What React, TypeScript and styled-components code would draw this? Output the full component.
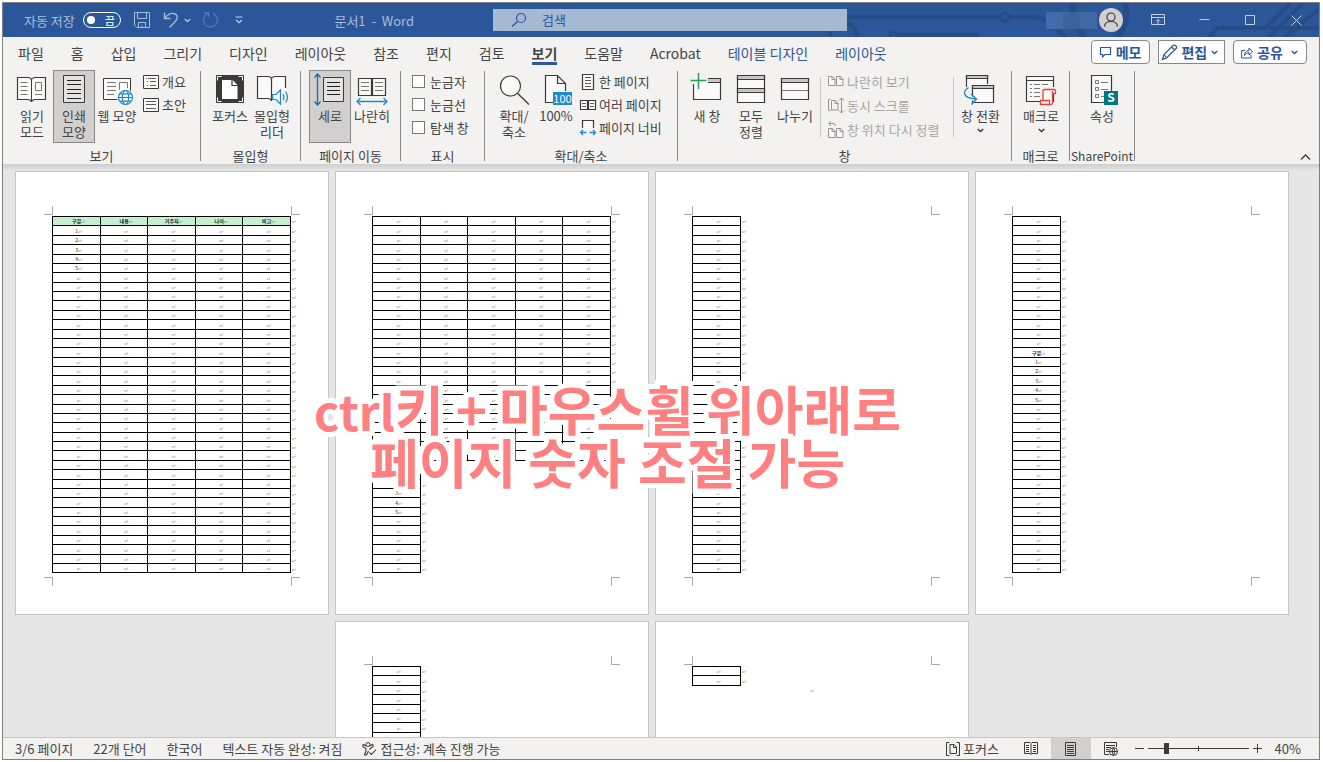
import React from "react";
import styled, { createGlobalStyle, css } from "styled-components";

const BLUE = "#2b579a";
const INK = "#3b3a39";

const GlobalStyle = createGlobalStyle`
  * { box-sizing: border-box; }
  html, body { margin: 0; padding: 0; background: #fff; }
  body {
    font-family: "Noto Sans CJK KR", "Noto Sans", sans-serif;
    font-size: 13px;
    color: #444;
  }
  button, input { font: inherit; color: inherit; }
  button { background: none; border: 0; padding: 0; margin: 0; }
`;

const Frame = styled.div`
  height: 100vh;
  padding: 2px 3px 2px 2px;
`;

const Window = styled.div`
  position: relative;
  height: 100%;
  display: flex;
  flex-direction: column;
  overflow: hidden;
  border: 1px solid #7f7f7f;
  background: #f3f2f1;
`;

/* ---------- title bar ---------- */

const TitleBar = styled.header`
  position: relative;
  flex: none;
  height: 34px;
  display: grid;
  grid-template-columns: 490fr 354fr 472fr;
  align-items: center;
  background: ${BLUE};
  color: #a9bddb;
`;

const Circuit = styled.svg`
  position: absolute;
  right: 0;
  top: 0;
`;

const TitleLeft = styled.div`
  display: flex;
  align-items: center;
  height: 34px;
  padding-left: 21px;
  white-space: nowrap;
`;

const AutoSave = styled.label`
  display: flex;
  align-items: center;
  gap: 8px;
`;

const Toggle = styled.button`
  width: 38px;
  height: 16px;
  display: flex;
  align-items: center;
  justify-content: space-between;
  padding: 0 5px 0 3px;
  border: 1px solid #fff;
  border-radius: 8px;
  color: #fff;
  font-size: 11px;
  line-height: 14px;
`;

const Knob = styled.span`
  width: 8px;
  height: 8px;
  border-radius: 50%;
  background: #fff;
`;

const QuickButton = styled.button<{ $space: number }>`
  display: flex;
  margin-left: ${(p) => p.$space}px;
`;

const DocTitle = styled.span`
  margin-left: auto;
  padding-right: 79px;
  white-space: pre;
`;

const SearchBox = styled.label`
  position: relative;
  display: flex;
  align-items: center;
  gap: 14px;
  height: 22px;
  padding-left: 18px;
  background: #a6b9d3;
  color: ${BLUE};
  input {
    flex: 1;
    min-width: 0;
    border: 0;
    padding: 0;
    background: none;
    outline: none;
    line-height: 20px;
  }
  input::placeholder { color: ${BLUE}; opacity: 1; }
`;

const TitleRight = styled.div`
  position: relative;
  display: flex;
  justify-content: flex-end;
  align-items: center;
`;

const UserName = styled.span`
  display: flex;
  width: 51px;
  height: 17px;
  margin-right: 2px;
  background: linear-gradient(90deg, #446ba9 0 17px, #3c639c 17px 34px, #4169a5 34px);
`;

const Avatar = styled.button`
  display: flex;
  width: 24px;
  height: 24px;
  margin-right: 12px;
  border-radius: 50%;
  background: #d2d0ce;
`;

const WindowButton = styled.button`
  width: 46px;
  height: 34px;
  display: flex;
  align-items: center;
  justify-content: center;
`;

/* ---------- tabs ---------- */

const TabBar = styled.nav`
  flex: none;
  display: flex;
  align-items: flex-start;
  height: 32px;
  padding: 3px 12px 0 15px;
`;

const Tab = styled.button<{ $active?: boolean; $context?: boolean }>`
  height: 25px;
  margin-right: 27px;
  font-size: 14px;
  line-height: 24px;
  white-space: nowrap;
  color: ${(p) => (p.$context ? BLUE : "#444")};
  ${(p) =>
    p.$active &&
    css`
      font-weight: 700;
      box-shadow: inset 0 -3px ${BLUE};
    `}
`;

const TabActions = styled.div`
  display: flex;
  gap: 8px;
  margin-left: auto;
`;

const ActionButton = styled.button<{ $square?: boolean }>`
  display: flex;
  align-items: center;
  gap: 4px;
  height: 24px;
  padding: 0 ${(p) => (p.$square ? 6 : 8)}px 0 ${(p) => (p.$square ? 2 : 7)}px;
  border: 1px solid #8a8886;
  border-radius: ${(p) => (p.$square ? 0 : 4)}px;
  background: #fff;
  color: ${BLUE};
  font-size: 14px;
  font-weight: 700;
  line-height: 20px;
  white-space: nowrap;
`;

/* ---------- ribbon ---------- */

const Ribbon = styled.div`
  position: relative;
  z-index: 1;
  flex: none;
  display: flex;
  height: 95px;
`;

const Group = styled.section<{ $width: number; $pad?: number }>`
  flex: none;
  display: flex;
  flex-direction: column;
  justify-content: space-between;
  width: ${(p) => p.$width}px;
  padding: 1px 0 0 ${(p) => p.$pad ?? 8}px;
  background: linear-gradient(#8a8886, #8a8886) right 2px / 1px 90px no-repeat;
`;

const GroupBody = styled.div<{ $gap?: number }>`
  display: flex;
  gap: ${(p) => p.$gap ?? 0}px;
`;

const GroupName = styled.h2<{ $pad?: number; $small?: boolean }>`
  margin: 0 1px 0 -${(p) => p.$pad ?? 8}px;
  font-size: ${(p) => (p.$small ? 12 : 13)}px;
  font-weight: 400;
  line-height: 16px;
  text-align: center;
  white-space: nowrap;
  color: #444;
`;

const LargeButton = styled.button<{ $active?: boolean; $wide?: boolean }>`
  flex: none;
  display: flex;
  flex-direction: column;
  align-items: center;
  gap: 2px;
  width: ${(p) => (p.$wide ? 44 : 42)}px;
  height: 73px;
  padding-top: 3px;
  border: 1px solid ${(p) => (p.$active ? "#8a8886" : "transparent")};
  background: ${(p) => (p.$active ? "#d2d0ce" : "transparent")};
  line-height: 16px;
  white-space: nowrap;
  color: #444;
  svg { flex: none; overflow: visible; }
  svg + svg { margin-top: 2px; }
`;

const SmallColumn = styled.div<{ $row: number; $space?: number }>`
  display: grid;
  grid-auto-rows: ${(p) => p.$row}px;
  align-content: start;
  margin-left: ${(p) => p.$space ?? 4}px;
`;

const SmallButton = styled.button`
  display: flex;
  align-items: center;
  gap: 3px;
  white-space: nowrap;
  line-height: 20px;
  &:disabled { color: #a8a6a4; }
  svg { flex: none; overflow: visible; }
`;

const CheckRow = styled.label`
  display: flex;
  align-items: center;
  gap: 5px;
  white-space: nowrap;
  line-height: 20px;
`;

const CheckBox = styled.input`
  appearance: none;
  width: 13px;
  height: 13px;
  margin: 0;
  border: 1px solid #7a7876;
  background: #fff;
`;

const InnerRule = styled.span<{ $before: number; $after: number }>`
  width: 1px;
  height: 60px;
  margin: 7px ${(p) => p.$after}px 0 ${(p) => p.$before}px;
  background: #c8c6c4;
`;

const Collapse = styled.button`
  display: flex;
  align-self: flex-end;
  margin: 0 8px 3px auto;
`;

/* ---------- document ---------- */

const Workspace = styled.main`
  flex: 1;
  min-height: 0;
  overflow: hidden;
  display: flex;
  flex-wrap: wrap;
  justify-content: center;
  align-content: flex-start;
  gap: 6px;
  padding: 7px 18px 0 0;
  background: linear-gradient(#cecece, #e6e6e6 7px);
`;

const Sheet = styled.article`
  position: relative;
  display: flex;
  flex-direction: column;
  width: 314px;
  height: 444px;
  padding: 34px 28px 28px;
  border: 1px solid #c6c6c6;
  background: #fff;
`;

const Corners = styled.div`
  display: flex;
  justify-content: space-between;
`;

const Corner = styled.span<{ $side: "left" | "right"; $edge: "top" | "bottom" }>`
  width: 9px;
  height: 9px;
  border: 0 solid #ababab;
  border-${(p) => (p.$side === "left" ? "right" : "left")}-width: 1px;
  border-${(p) => (p.$edge === "top" ? "bottom" : "top")}-width: 1px;
`;

const SheetBody = styled.div`
  flex: 1;
  min-height: 0;
  padding: 1px 0 0 8px;
`;

const Grid = styled.table`
  border-collapse: separate;
  border-spacing: 0;
  table-layout: fixed;
  width: max-content;
  font-size: 5px;
  line-height: 8px;
  text-align: center;
  color: #222;
`;

const GridRow = styled.tr<{ $tall: boolean; $top: boolean }>`
  height: ${(p) => (p.$tall ? 10 : 9) + (p.$top ? 1 : 0)}px;
`;

const cell = css<{ $w: number; $first: boolean; $top: boolean }>`
  width: ${(p) => p.$w}px;
  padding: 0 0 0 4px;
  border: 0 solid #000;
  border-width: ${(p) => (p.$top ? 1 : 0)}px 1px 1px ${(p) => (p.$first ? 1 : 0)}px;
`;

const Cell = styled.td`${cell}`;
const HeadCell = styled.th<{ $green: boolean }>`
  ${cell}
  font-weight: 700;
  background: ${(p) => (p.$green ? "#c6efce" : "transparent")};
`;

const RowEnd = styled.td`
  width: 6px;
  padding: 0 0 0 1px;
  text-align: left;
`;

const Mark = styled.span`
  color: #8c8c8c;
  font-family: "DejaVu Sans Mono", monospace;
  font-size: 6px;
  font-weight: 400;
  line-height: 6px;
`;

const LooseMark = styled.p`
  margin: 0;
  padding-right: 8px;
  text-align: center;
  font-size: 5px;
  line-height: 8px;
`;

const Caption = styled.p`
  position: absolute;
  z-index: 2;
  top: 380px;
  left: 0;
  right: 107px;
  margin: 0;
  text-align: center;
  font-size: 53px;
  font-weight: 700;
  line-height: 51px;
  color: #ff8080;
  -webkit-text-stroke: 10px #fff;
  paint-order: stroke fill;
  stroke-linejoin: round;
  pointer-events: none;
`;

const KeyName = styled.span`
  font-size: 48px;
`;

/* ---------- status bar ---------- */

const StatusBar = styled.footer`
  position: relative;
  z-index: 3;
  flex: none;
  display: flex;
  align-items: center;
  height: 22px;
  padding: 0 18px 0 12px;
  border-top: 1px solid #c6c6c6;
  background: #f3f2f1;
  line-height: 20px;
  white-space: nowrap;
`;

const StatusItems = styled.div`
  display: flex;
  gap: 20px;
  margin-right: auto;
`;

const StatusItem = styled.button`
  display: flex;
  align-items: center;
  gap: 3px;
`;

const ViewButtons = styled.div`
  display: flex;
  margin-left: 12px;
`;

const ViewButton = styled.button<{ $active?: boolean }>`
  display: flex;
  align-items: center;
  justify-content: center;
  width: 40px;
  height: 21px;
  background: ${(p) => (p.$active ? "#d2d0ce" : "transparent")};
`;

const ZoomButton = styled.button`
  display: flex;
  padding: 0 4px;
`;

const ZoomSlider = styled.input`
  appearance: none;
  width: 101px;
  height: 12px;
  margin: 0;
  background:
    linear-gradient(#3b3a39, #3b3a39) center / 1px 5px no-repeat,
    linear-gradient(#3b3a39, #3b3a39) center / 100% 1px no-repeat;
  &::-webkit-slider-thumb {
    appearance: none;
    width: 5px;
    height: 11px;
    background: #3b3a39;
  }
`;

const ZoomValue = styled.button`
  width: 35px;
  text-align: right;
`;

/* ---------- icons ---------- */

type IconProps = { w?: number; h?: number; color?: string; children: React.ReactNode };

const Icon = ({ w = 32, h = 32, color = INK, children }: IconProps) => (
  <svg width={w} height={h} viewBox={`0 0 ${w} ${h}`} fill="none" stroke={color} aria-hidden="true">
    {children}
  </svg>
);

const Chevron = ({ color = INK }: { color?: string }) => (
  <Icon w={7} h={5} color={color}>
    <path d="M.7 1 3.5 3.6 6.3 1" strokeWidth="1.4" />
  </Icon>
);

const ReadIcon = () => (
  <Icon>
    <path
      fill="#fafafa"
      strokeWidth="1.2"
      d="M1.5 3.5H11.5Q15.5 3.8 15.5 6Q15.5 3.8 19.5 3.5H29.5V25.5H19.5Q16 25.6 15.5 28Q15 25.6 11.5 25.5H1.5Z"
    />
    <path d="M15.5 6V27" />
    <path stroke="#797774" d="M4.5 8.5h7M4.5 12.5h7M4.5 16.5h7M4.5 20.5h7M19.5 8.5h6v8h-6zM19 20.5h7" />
  </Icon>
);

const PrintIcon = () => (
  <Icon>
    <path fill="#e4e3e2" d="M5.5 1.5h21v27h-21z" />
    <path stroke="#222" d="M9 6.5h14M9 10.5h14M9 15.5h14M9 19.5h14M9 24.5h14" />
  </Icon>
);

const WebIcon = () => (
  <Icon>
    <path fill="#fafafa" d="M2.5 4.5h27v21h-27z" />
    <path stroke="#797774" d="M6 8.5h9M6 12.5h9M6 16.5h9M6 20.5h7M18.5 16V8.5h8V14" />
    <circle cx="24.5" cy="23.5" r="8.6" fill="#f3f2f1" stroke="none" />
    <g stroke="#1e8bcd" strokeWidth="1.2">
      <circle cx="24.5" cy="23.5" r="7" fill="#fafafa" />
      <ellipse cx="24.5" cy="23.5" rx="3.2" ry="7" />
      <path d="M17.5 23.5h14M18.8 19.8h11.4M18.8 27.2h11.4" />
    </g>
  </Icon>
);

const OutlineIcon = () => (
  <Icon w={16} h={14}>
    <path fill="#fafafa" d="M.5.5h15v13H.5z" />
    <path stroke="#605e5c" d="M3 3.5h1M5 3.5h8M4 6.5h1M7 6.5h6M4 10.5h1M7 10.5h6" />
  </Icon>
);

const DraftIcon = () => (
  <Icon w={16} h={14}>
    <path fill="#fafafa" d="M.5.5h15v13H.5z" />
    <path stroke="#605e5c" d="M3 3.5h10M3 6.5h10M3 10.5h10" />
  </Icon>
);

const FocusIcon = () => (
  <Icon>
    <rect x="2" y="1" width="28" height="28" rx="1" fill={INK} stroke="none" />
    <path stroke="#fff" d="M3.5 6.5v-4h4M24.5 2.5h4v4M28.5 23.5v4h-4M7.5 27.5h-4v-4" />
    <path fill="#fff" stroke="none" d="M8 6h10.5l5 5v14H8z" />
    <path d="M18 5.5v6h6" strokeWidth="1.2" />
  </Icon>
);

const ReaderIcon = () => (
  <Icon>
    <path
      fill="#fafafa"
      stroke="none"
      d="M1.5 2.5H11.5Q15.5 2.8 15.5 5Q15.5 2.8 19.5 2.5H29.5V24.5H1.5Z"
    />
    <path
      strokeWidth="1.2"
      d="M29.5 14V2.5H19.5Q15.5 2.8 15.5 5Q15.5 2.8 11.5 2.5H1.5V24.5H11.5Q15 24.6 15.5 27V5"
    />
    <path fill="#fafafa" stroke="#1e8bcd" strokeWidth="1.2" d="M16.5 20.5h3.5l4.5-4.5v14l-4.5-4.5h-3.5z" />
    <path stroke="#1e8bcd" strokeWidth="1.2" d="M27 20q2 3 0 6M29.5 17.5q4 5.5 0 11" />
  </Icon>
);

const VerticalIcon = () => (
  <Icon>
    <path stroke="#0f6cbd" strokeWidth="1.3" d="M3.5 0v31M.5 3.5l3-3.5 3 3.5M.5 27.5l3 3.5 3-3.5" />
    <path fill="#e4e3e2" d="M9.5 3.5h20v24h-20z" />
    <path stroke="#222" d="M13 8.5h13M13 12.5h13M13 16.5h13M13 20.5h13" />
  </Icon>
);

const SideIcon = () => (
  <Icon>
    <path fill="#fafafa" strokeWidth="1.2" d="M2.5 4.5h13v17h-13zM16.5 4.5h13v17h-13z" />
    <path stroke="#797774" d="M5 8.5h8M5 12.5h8M5 16.5h8M19 8.5h8M19 12.5h8M19 16.5h8" />
    <path stroke="#1e8bcd" strokeWidth="1.3" d="M1 27.5h30M4.5 24l-3.5 3.5 3.5 3.5M27.5 24l3.5 3.5-3.5 3.5" />
  </Icon>
);

const ZoomIcon = () => (
  <Icon>
    <circle cx="12.5" cy="12" r="10" fill="#fafafa" strokeWidth="1.2" />
    <path strokeWidth="1.3" d="M19.5 19.3 31 30.5" />
  </Icon>
);

const HundredIcon = () => (
  <Icon>
    <path fill="#fafafa" strokeWidth="1.2" d="M13 28.5H5.5v-27H17.5l8 8V17M17.5 1.5v8h8" />
    <rect x="13" y="18" width="19" height="13" fill="#1e8bcd" stroke="none" />
    <text x="22.5" y="29" textAnchor="middle" fontSize="11" fill="#fff" stroke="none">
      100
    </text>
  </Icon>
);

const OnePageIcon = () => (
  <Icon w={16} h={16}>
    <path fill="#fafafa" strokeWidth="1.2" d="M2.5.5h11v15h-11z" />
    <path stroke="#605e5c" d="M5 3.5h6M5 6.5h6M5 9.5h6M5 12.5h6" />
  </Icon>
);

const ManyPagesIcon = () => (
  <Icon w={16} h={16}>
    <path fill="#fafafa" strokeWidth="1.2" d="M.5 3.5h7v9h-7zM8.5 3.5h7v9h-7z" />
    <path stroke="#605e5c" d="M2 6.5h4M2 9.5h4M10 6.5h4M10 9.5h4" />
  </Icon>
);

const PageWidthIcon = () => (
  <Icon w={16} h={16}>
    <path fill="#fafafa" strokeWidth="1.2" d="M2.5 8V.5h11V8" />
    <path stroke="#1e8bcd" strokeWidth="1.3" d="M.5 12.5h6M9.5 12.5h6M3 10 .5 12.5 3 15M13 10l2.5 2.5L13 15" />
  </Icon>
);

const NewWindowIcon = () => (
  <Icon>
    <path fill="#fafafa" stroke="none" d="M2.5 8h27v17.5h-27z" />
    <path fill="#c8c6c4" stroke="none" d="M17 5h12v3H17z" />
    <path strokeWidth="1.2" d="M17 4.5h12.5v21h-27V10M17 8.5h12" />
    <path stroke="#2f9e4f" strokeWidth="1.5" d="M7.5-1v16M-.5 6.5h16" />
  </Icon>
);

const ArrangeIcon = () => (
  <Icon>
    <path fill="#fafafa" strokeWidth="1.2" d="M2.5 1.5h27v27h-27z" />
    <path fill="#c8c6c4" strokeWidth="1.2" d="M2.5 1.5h27v4h-27zM2.5 14.5h27v4h-27z" />
  </Icon>
);

const SplitIcon = () => (
  <Icon>
    <path fill="#fafafa" strokeWidth="1.2" d="M2.5 4.5h27v21h-27z" />
    <path fill="#c8c6c4" strokeWidth="1.2" d="M2.5 4.5h27v4h-27z" />
    <path stroke="#797774" d="M3 16.5h26" />
  </Icon>
);

const TwoDocs = ({ y }: { y: number }) => (
  <path
    fill="#f8f8f8"
    d={`M.5 ${y}h4l2.5 2.5v6.5h-6.5zM4 ${y}v3h3M8.5 ${y}h4l2.5 2.5v6.5h-6.5zM12 ${y}v3h3`}
  />
);

const CompareIcon = () => (
  <Icon w={16} h={16} color="#979593">
    <TwoDocs y={2.5} />
  </Icon>
);

const SyncIcon = () => (
  <Icon w={16} h={16} color="#979593">
    <path d="M2.5 1.5h-2v11h2M3.5 2.5h4l2.5 2.5v7h-6.5zM7 2.5v3h3M13.5 0v15M11 2.5 13.5 0 16 2.5M11 12.5l2.5 2.5 2.5-2.5" />
  </Icon>
);

const ResetIcon = () => (
  <Icon w={16} h={16} color="#979593">
    <TwoDocs y={6.5} />
    <path d="M3-1 .7 1.5 3 4M1 1.5h4q2.5 0 2.5 2.5" />
  </Icon>
);

const SwitchIcon = () => (
  <Icon>
    <path fill="#fafafa" strokeWidth="1.2" d="M2.5 13V1.5h21V10" />
    <path fill="#c8c6c4" strokeWidth="1.2" d="M2.5 1.5h21v3h-21z" />
    <path fill="#fafafa" strokeWidth="1.2" d="M8.5 11.5h21v17h-21z" />
    <path fill="#c8c6c4" strokeWidth="1.2" d="M8.5 11.5h21v3h-21z" />
    <path stroke="#f3f2f1" strokeWidth="4" d="M4.5 14Q.5 16 .5 19Q1 24.5 11 25" />
    <path stroke="#1e8bcd" strokeWidth="1.4" d="M4.5 13.5Q.5 16 .5 19Q1 24.5 12 25M7 20l5.5 5L7.5 30.5" />
  </Icon>
);

const MacroIcon = () => (
  <Icon>
    <path fill="#fafafa" strokeWidth="1.2" d="M1.5 2.5h27v25h-27zM1.5 6.5h27" />
    <path stroke="#797774" strokeDasharray="2 2 6 2 6 20" d="M5 10.5h20M5 14.5h20M5 18.5h12M5 22.5h12" />
    <path stroke="#f3f2f1" strokeWidth="3" d="M16.5 26V14.5H30" />
    <path
      fill="#fafafa"
      stroke="#e8403c"
      strokeWidth="1.3"
      d="M18 26.5V17q0-1.500 1.500-1.500H29q1.500 0 1.500 1.500v2.500h-3V29q0 1.500-1.500 1.500H15.500v-4h9v4M27.500 19.500V17"
    />
  </Icon>
);

const PropertyIcon = () => (
  <Icon>
    <path fill="#fafafa" strokeWidth="1.2" d="M5.5 1.5h20v27h-20z" />
    <path stroke="#797774" d="M9.5 6.5h3v3h-3zM9.5 13.5h3v3h-3zM9.5 20.5h3v3h-3zM15 8.5h7M15 15.5h7M15 22.5h3" />
    <rect x="18" y="17" width="14" height="14" fill="#03787c" stroke="none" />
    <text x="25" y="28" textAnchor="middle" fontSize="12" fontWeight="700" fill="#fff" stroke="none">
      S
    </text>
  </Icon>
);

/* ---------- sheet contents ---------- */

const COLUMN_WIDTHS = [49, 47, 48, 47, 48];
const TALL_ROWS = [1, 3, 6];
const isTall = (row: number) => TALL_ROWS.includes(row % 8);
const HEADS = ["구분", "내용", "거주지", "나이", "비고"];

type BlockProps = { start: number; rows: number; columns: number; labels?: string[]; head?: string[]; green?: boolean };

const Block = ({ start, rows, columns, labels = [], head, green = false }: BlockProps) => (
  <Grid>
    <tbody>
      {Array.from({ length: rows }, (_, r) => {
        const index = start + r;
        const top = index === 0;
        return (
          <GridRow key={index} $tall={isTall(index)} $top={top}>
            {COLUMN_WIDTHS.slice(0, columns).map((w, c) => {
              const shared = { $w: w, $first: c === 0, $top: top };
              return head && r === 0 ? (
                <HeadCell key={c} {...shared} $green={green} scope="col">
                  {head[c]}
                  <Mark>↵</Mark>
                </HeadCell>
              ) : (
                <Cell key={c} {...shared}>
                  {c === 0 ? labels[r - 1] : null}
                  <Mark>↵</Mark>
                </Cell>
              );
            })}
            <RowEnd>
              <Mark>↵</Mark>
            </RowEnd>
          </GridRow>
        );
      })}
    </tbody>
  </Grid>
);

const NUMBERS = ["1", "2", "3", "4", "5"];

const Page = ({ children }: { children: React.ReactNode }) => (
  <Sheet>
    <Corners>
      <Corner $side="left" $edge="top" />
      <Corner $side="right" $edge="top" />
    </Corners>
    <SheetBody>{children}</SheetBody>
    <Corners>
      <Corner $side="left" $edge="bottom" />
      <Corner $side="right" $edge="bottom" />
    </Corners>
  </Sheet>
);

const TABS = ["파일", "홈", "삽입", "그리기", "디자인", "레이아웃", "참조", "편지", "검토", "보기", "도움말", "Acrobat"];

export default function App() {
  return (
    <Frame>
      <GlobalStyle />
      <Window>
        <TitleBar>
          <Circuit width="490" height="34" fill="none" stroke="#274b85" strokeWidth="4" aria-hidden="true">
            <path d="M18 14H172M181 14H204Q214 14 222 21L236 34M66 32H150M0 34a14 14 0 0 1 28 0" />
            <circle cx="176" cy="14" r="4" strokeWidth="3" />
            <circle cx="65" cy="33" r="4" strokeWidth="3" />
            <path d="M244 0a36 36 0 0 0 12 34M296 0a36 36 0 0 1-8 34" strokeWidth="6" />
            <path d="M380 34 389 25H436L462 0M440 34 474 0M456 34 490 6M440 25H490" />
          </Circuit>
          <TitleLeft>
            <AutoSave>
              자동 저장
              <Toggle type="button">
                <Knob />끔
              </Toggle>
            </AutoSave>
            <QuickButton $space={13} aria-label="저장">
              <Icon w={16} h={16} color="#a9bddb">
                <path d="M.5.5h15v15H3L.5 13zM3.5.5v6h9v-6M4.5 15.5v-5h7v5M8 15.5v-2" />
              </Icon>
            </QuickButton>
            <QuickButton $space={13} aria-label="실행 취소">
              <Icon w={16} h={16} color="#a9bddb">
                <path d="M1.5.5v6h6M1.8 6.2Q6 1 10.5 1.5Q15 2.5 14 7Q13.5 8.5 6.5 15.5" strokeWidth="1.3" />
              </Icon>
            </QuickButton>
            <QuickButton $space={5} aria-label="실행 취소 목록">
              <Chevron color="#a9bddb" />
            </QuickButton>
            <QuickButton $space={11} aria-label="다시 실행">
              <Icon w={17} h={16} color="#5179b3">
                <path d="M2 .5h4.5v4.5M6.3 1.3Q1 3.5 1.5 8.5Q2.5 14.5 8.5 15Q15 14.5 15.5 8.5Q15.5 3.5 11 1.5" strokeWidth="1.3" />
              </Icon>
            </QuickButton>
            <QuickButton $space={16} aria-label="빠른 실행 도구 모음 사용자 지정">
              <Icon w={8} h={8} color="#c3d0e5">
                <path d="M.5 1h7M1 4l3 2.7L7 4" strokeWidth="1.2" />
              </Icon>
            </QuickButton>
            <DocTitle>{"문서1  -  Word"}</DocTitle>
          </TitleLeft>
          <SearchBox>
            <Icon w={17} h={16} color={BLUE}>
              <circle cx="10" cy="6" r="4.5" strokeWidth="1.2" />
              <path d="M6.5 9.5 1 14.5" strokeWidth="1.4" />
            </Icon>
            <input type="text" placeholder="검색" aria-label="검색" />
          </SearchBox>
          <TitleRight>
            <UserName />
            <Avatar aria-label="계정">
              <Icon w={24} h={24}>
                <circle cx="12" cy="9" r="4" strokeWidth="1.2" />
                <path d="M5.5 18.5Q6 13.5 12 13.5T18.5 18.5" strokeWidth="1.2" />
              </Icon>
            </Avatar>
            <WindowButton aria-label="리본 메뉴 표시 옵션">
              <Icon w={14} h={12} color="#c3d0e5">
                <path d="M.5.5h13v10H.5zM.5 3.5h13M7 10V5.5M5 7.5l2-2 2 2" />
              </Icon>
            </WindowButton>
            <WindowButton aria-label="최소화">
              <Icon w={11} h={11} color="#c3d0e5">
                <path d="M.5 4.5h10" />
              </Icon>
            </WindowButton>
            <WindowButton aria-label="최대화">
              <Icon w={11} h={11} color="#c3d0e5">
                <path d="M.5.5h9v9h-9z" />
              </Icon>
            </WindowButton>
            <WindowButton aria-label="닫기">
              <Icon w={11} h={11} color="#c3d0e5">
                <path d="M.5.5l10 10M10.5.5l-10 10" />
              </Icon>
            </WindowButton>
          </TitleRight>
        </TitleBar>

        <TabBar>
          {TABS.map((name) => (
            <Tab key={name} $active={name === "보기"}>
              {name}
            </Tab>
          ))}
          <Tab $context>테이블 디자인</Tab>
          <Tab $context>레이아웃</Tab>
          <TabActions>
            <ActionButton>
              <Icon w={13} h={12} color={BLUE}>
                <path d="M1.5 1.5h10v7H6L3.5 11V8.5h-2z" strokeWidth="1.2" />
              </Icon>
              메모
            </ActionButton>
            <ActionButton $square>
              <Icon w={16} h={17} color={BLUE}>
                <path d="M1.5 15.5 3 10.5 12 1.5Q13.5.5 15 2t-.5 3L5.5 14zM10.5 3l3 3M3 10.5 5.5 14" strokeWidth="1.2" />
              </Icon>
              편집
              <Chevron color={BLUE} />
            </ActionButton>
            <ActionButton>
              <Icon w={12} h={13} color={BLUE}>
                <path d="M4 4.5H.6v7.5h9.5V9M3.5 9.5Q3.5 5 8 4.5V2l3.5 4L8 9V6.5Q5 6.5 3.5 9.5z" />
              </Icon>
              공유
              <span />
              <Chevron color={BLUE} />
            </ActionButton>
          </TabActions>
        </TabBar>

        <Ribbon>
          <Group $width={198}>
            <GroupBody>
              <LargeButton><ReadIcon /><span>읽기<br />모드</span></LargeButton>
              <LargeButton $active><PrintIcon /><span>인쇄<br />모양</span></LargeButton>
              <LargeButton $wide><WebIcon />웹 모양</LargeButton>
              <SmallColumn $row={23}>
                <SmallButton><OutlineIcon />개요</SmallButton>
                <SmallButton><DraftIcon />초안</SmallButton>
              </SmallColumn>
            </GroupBody>
            <GroupName>보기</GroupName>
          </Group>
          <Group $width={100}>
            <GroupBody>
              <LargeButton><FocusIcon />포커스</LargeButton>
              <LargeButton><ReaderIcon /><span>몰입형<br />리더</span></LargeButton>
            </GroupBody>
            <GroupName>몰입형</GroupName>
          </Group>
          <Group $width={100}>
            <GroupBody>
              <LargeButton $active><VerticalIcon />세로</LargeButton>
              <LargeButton><SideIcon />나란히</LargeButton>
            </GroupBody>
            <GroupName>페이지 이동</GroupName>
          </Group>
          <Group $width={84} $pad={11}>
            <SmallColumn $row={23} $space={0}>
              {["눈금자", "눈금선", "탐색 창"].map((name) => (
                <CheckRow key={name}>
                  <CheckBox type="checkbox" />
                  {name}
                </CheckRow>
              ))}
            </SmallColumn>
            <GroupName $pad={11}>표시</GroupName>
          </Group>
          <Group $width={193}>
            <GroupBody>
              <LargeButton><ZoomIcon /><span>확대/<br />축소</span></LargeButton>
              <LargeButton><HundredIcon />100%</LargeButton>
              <SmallColumn $row={23} $space={3}>
                <SmallButton><OnePageIcon />한 페이지</SmallButton>
                <SmallButton><ManyPagesIcon />여러 페이지</SmallButton>
                <SmallButton><PageWidthIcon />페이지 너비</SmallButton>
              </SmallColumn>
            </GroupBody>
            <GroupName>확대/축소</GroupName>
          </Group>
          <Group $width={334}>
            <GroupBody $gap={2}>
              <LargeButton><NewWindowIcon />새 창</LargeButton>
              <LargeButton><ArrangeIcon /><span>모두<br />정렬</span></LargeButton>
              <LargeButton><SplitIcon />나누기</LargeButton>
              <InnerRule $before={2} $after={0} />
              <SmallColumn $row={24} $space={5}>
                <SmallButton disabled><CompareIcon />나란히 보기</SmallButton>
                <SmallButton disabled><SyncIcon />동시 스크롤</SmallButton>
                <SmallButton disabled><ResetIcon />창 위치 다시 정렬</SmallButton>
              </SmallColumn>
              <InnerRule $before={12} $after={3} />
              <LargeButton><SwitchIcon />창 전환<Chevron /></LargeButton>
            </GroupBody>
            <GroupName>창</GroupName>
          </Group>
          <Group $width={58}>
            <GroupBody>
              <LargeButton><MacroIcon />매크로<Chevron /></LargeButton>
            </GroupBody>
            <GroupName>매크로</GroupName>
          </Group>
          <Group $width={65} $pad={11}>
            <GroupBody>
              <LargeButton><PropertyIcon />속성</LargeButton>
            </GroupBody>
            <GroupName $pad={11} $small>SharePoint</GroupName>
          </Group>
          <Collapse aria-label="리본 메뉴 축소">
            <Icon w={11} h={7}>
              <path d="M1 5.5 5.5 1 10 5.5" strokeWidth="1.3" />
            </Icon>
          </Collapse>
        </Ribbon>

        <Workspace>
          <Page>
            <Block start={0} rows={38} columns={5} labels={NUMBERS} head={HEADS} green />
          </Page>
          <Page>
            <Block start={0} rows={26} columns={5} />
            <Block start={26} rows={12} columns={1} labels={NUMBERS} head={HEADS} />
          </Page>
          <Page>
            <Block start={0} rows={38} columns={1} />
          </Page>
          <Page>
            <Block start={0} rows={14} columns={1} />
            <Block start={14} rows={24} columns={1} labels={NUMBERS} head={HEADS} />
          </Page>
          <Page>
            <Block start={0} rows={38} columns={1} />
          </Page>
          <Page>
            <Block start={0} rows={2} columns={1} />
            <LooseMark>
              <Mark>↵</Mark>
            </LooseMark>
          </Page>
        </Workspace>

        <Caption>
          <KeyName>ctrl</KeyName>키 + 마우스휠 위아래로
          <br />
          페이지 숫자 조절 가능
        </Caption>

        <StatusBar>
          <StatusItems>
            <StatusItem>3/6 페이지</StatusItem>
            <StatusItem>22개 단어</StatusItem>
            <StatusItem>한국어</StatusItem>
            <StatusItem>텍스트 자동 완성: 켜짐</StatusItem>
            <StatusItem>
              <Icon w={15} h={14}>
                <circle cx="6" cy="2.5" r="2" />
                <path d="M4.5 4 1.5 2.5Q0 3.5 1.5 5L4 6.5V9L2.5 12.5Q4 14 5 12L6.5 9M7.5 4l3-1.5q1.5 1 0 2.5L8 6.5V8M7.5 10.5 9.5 12.5 14 7.5" strokeWidth="1.1" />
              </Icon>
              접근성: 계속 진행 가능
            </StatusItem>
          </StatusItems>
          <StatusItem>
            <Icon w={14} h={14}>
              <path d="M3.5.5h-3v3M10.5.5h3v3M3.5 13.5h-3v-3M10.5 13.5h3v-3M.5 3v8M13.5 3v8M4 2.5h4l2.5 2.5v6.5H4zM7.5 2.5v3h3" />
            </Icon>
            포커스
          </StatusItem>
          <ViewButtons>
            <ViewButton aria-label="읽기 모드">
              <Icon w={14} h={13}>
                <path d="M.5.5h5.5l1 1 1-1h5.5v11H8l-1 1-1-1H.5zM7 2v10M2 3.5h3M2 5.5h3M2 7.5h3M2 9.5h3M9 3.5h3M9 5.5h3M9 7.5h3M9 9.5h3" />
              </Icon>
            </ViewButton>
            <ViewButton $active aria-label="인쇄 모양">
              <Icon w={12} h={14}>
                <path d="M.5.5h10v13h-10zM2 3.5h7M2 5.5h7M2 7.5h7M2 9.5h7M2 11.5h7" />
              </Icon>
            </ViewButton>
            <ViewButton aria-label="웹 모양">
              <Icon w={14} h={14}>
                <path d="M5 12.5H.5V.5h12V5M2 3.5h9M2 5.5h5M2 7.5h3M2 9.5h3" />
                <circle cx="9.5" cy="9.5" r="4" />
                <path d="M5.5 9.5h8M9.5 5.5q-3 4 0 8q3-4 0-8" />
              </Icon>
            </ViewButton>
          </ViewButtons>
          <ZoomButton aria-label="축소">
            <Icon w={9} h={9}>
              <path d="M0 4.5h9" />
            </Icon>
          </ZoomButton>
          <ZoomSlider type="range" min={0} max={100} defaultValue={17} aria-label="확대/축소" />
          <ZoomButton aria-label="확대">
            <Icon w={9} h={9}>
              <path d="M0 4.5h9M4.5 0v9" />
            </Icon>
          </ZoomButton>
          <ZoomValue>40%</ZoomValue>
        </StatusBar>
      </Window>
    </Frame>
  );
}
